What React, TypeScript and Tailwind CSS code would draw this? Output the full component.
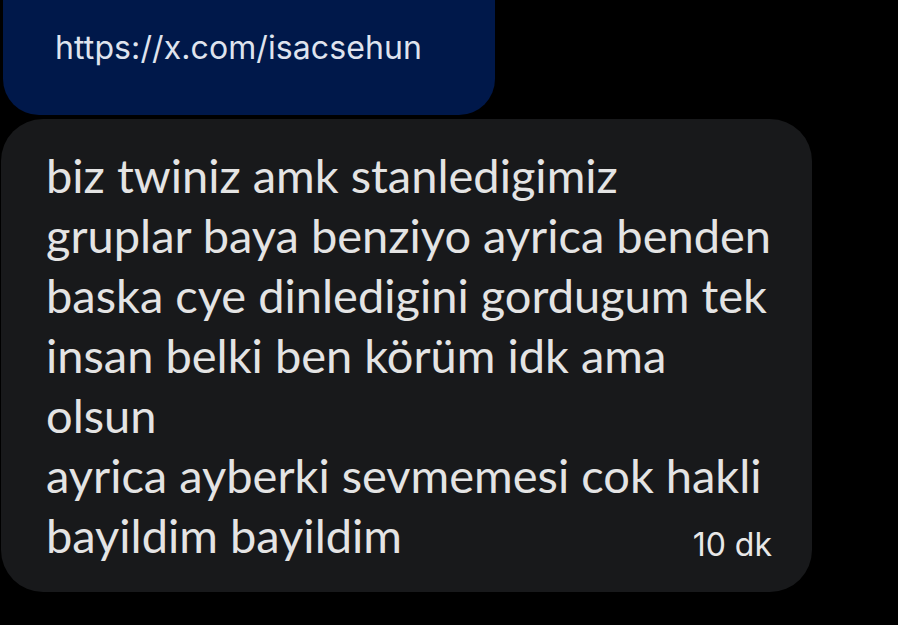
export default function App() {
  const lines = [
    "biz twiniz amk stanledigimiz",
    "gruplar baya benziyo ayrica benden",
    "baska cye dinledigini gordugum tek",
    "insan belki ben körüm idk ama",
    "olsun",
    "ayrica ayberki sevmemesi cok hakli",
  ];
  return (
    <div className="w-[898px] h-[625px] bg-black overflow-hidden flex flex-col">
      {/* Sent link bubble */}
      <div className="ml-[3px] mt-[-40px] w-[492px] h-[155px] bg-[#00184a] rounded-[36px] flex items-end pb-[48px] pl-[52px]">
        <span className="text-[32px] leading-[38px] tracking-[0.1px] text-[#dfe3ee] font-['Inter',sans-serif]">
          https://x.com/isacsehun
        </span>
      </div>

      {/* Received message bubble */}
      <div className="mt-[4px] ml-[1px] w-[811px] h-[473px] bg-[#18191b] rounded-[42px] pl-[45px] pr-[40px] pt-[26px]">
        <div className="text-[47px] leading-[60px] text-[#e4e4e4] font-['Lato',sans-serif]">
          {lines.map((l) => (
            <div key={l}>{l}</div>
          ))}
          <div className="flex items-end justify-between">
            <span>bayildim bayildim</span>
            <span className="text-[32px] leading-[40px] text-[#e8e8e8] font-['Inter',sans-serif] mb-[0px]">
              10 dk
            </span>
          </div>
        </div>
      </div>
    </div>
  );
}
